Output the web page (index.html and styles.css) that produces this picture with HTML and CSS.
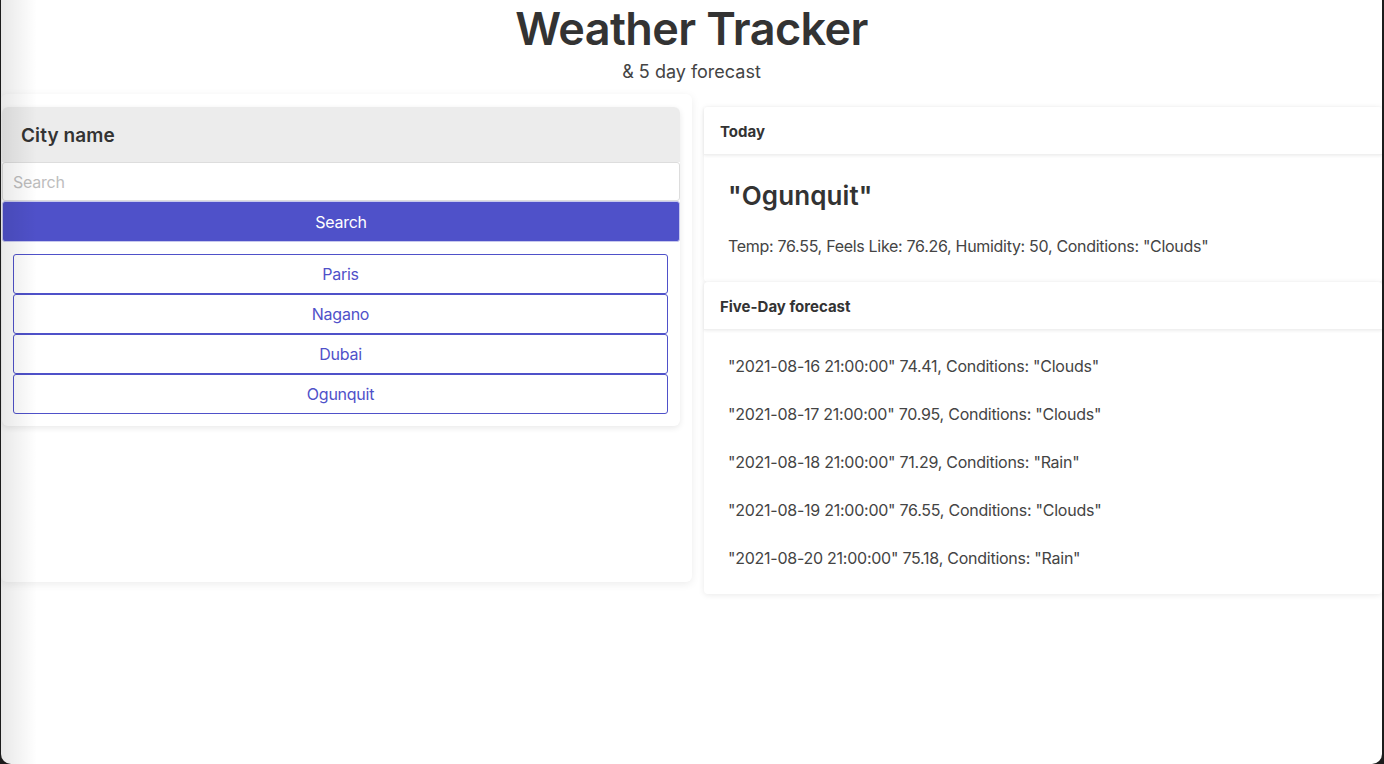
FILE: index.html
```html
<!DOCTYPE html>
<html lang="en">
<head>
<meta charset="utf-8">
<title>Weather Tracker</title>
<link rel="stylesheet" href="styles.css">
</head>
<body>
<div class="window">
  <header class="page-head">
    <h1 class="title">Weather Tracker</h1>
    <p class="subtitle">&amp; 5 day forecast</p>
  </header>
  <main class="layout">
    <section class="search-col">
      <div class="search-card">
        <div class="search-head">City name</div>
        <input class="search-input" type="text" placeholder="Search">
        <button class="search-btn">Search</button>
        <div class="history">
          <button class="city-btn">Paris</button>
          <button class="city-btn">Nagano</button>
          <button class="city-btn">Dubai</button>
          <button class="city-btn">Ogunquit</button>
        </div>
      </div>
    </section>
    <section class="weather-col">
      <div class="card">
        <div class="card-head">Today</div>
        <div class="today-body">
          <h2 class="city">"Ogunquit"</h2>
          <p class="today-info">Temp: 76.55, Feels Like: 76.26, Humidity: 50, Conditions: "Clouds"</p>
        </div>
      </div>
      <div class="card">
        <div class="card-head">Five-Day forecast</div>
        <ul class="forecast">
          <li>"2021-08-16 21:00:00" 74.41, Conditions: "Clouds"</li>
          <li>"2021-08-17 21:00:00" 70.95, Conditions: "Clouds"</li>
          <li>"2021-08-18 21:00:00" 71.29, Conditions: "Rain"</li>
          <li>"2021-08-19 21:00:00" 76.55, Conditions: "Clouds"</li>
          <li>"2021-08-20 21:00:00" 75.18, Conditions: "Rain"</li>
        </ul>
      </div>
    </section>
  </main>
</div>
</body>
</html>
```

FILE: styles.css
```css
* { box-sizing: border-box; }
html, body { margin: 0; padding: 0; }
body {
  background: #1c1c1c;
  font-family: Inter, "Noto Sans", "Liberation Sans", sans-serif;
  color: #333;
  letter-spacing: -0.25px;
}
.window {
  position: relative;
  margin: 0 2px 0 1px;
  height: 764px;
  background: #fff;
  border-radius: 0 0 10px 10px;
  overflow: hidden;
}
.window::after {
  content: "";
  position: absolute;
  top: 0; left: 0; bottom: 0;
  width: 36px;
  background: linear-gradient(to right, rgba(0,0,0,0.09), rgba(0,0,0,0));
  pointer-events: none;
}
.page-head { text-align: center; }
.title {
  margin: 0;
  font-size: 45px;
  line-height: 58px;
  font-weight: 600;
  color: #333;
  letter-spacing: -0.6px;
}
.subtitle {
  margin: 2px 0 0;
  font-size: 18px;
  line-height: 24px;
  color: #444;
  letter-spacing: 0;
}
.layout {
  display: flex;
  gap: 12px;
  margin-top: 10px;
  align-items: flex-start;
}
.search-col {
  width: 691px;
  height: 488px;
  background: #fff;
  border-radius: 6px;
  box-shadow: 0 2px 8px rgba(0,0,0,0.08);
  padding: 13px 12px 0 1px;
}
.search-card {
  display: flex;
  flex-direction: column;
  background: #fff;
  border-radius: 6px;
  box-shadow: 0 2px 6px rgba(0,0,0,0.09);
}
.search-head {
  height: 55px;
  display: flex;
  align-items: center;
  padding-left: 19px;
  padding-top: 1px;
  background: #ececec;
  border-radius: 6px 6px 0 0;
  font-size: 19px;
  font-weight: 600;
  color: #333;
  letter-spacing: 0.1px;
}
.search-input {
  height: 39px;
  border: 1px solid #ddd;
  border-radius: 3px;
  padding: 0 10px;
  font-family: inherit;
  font-size: 16px;
  letter-spacing: -0.25px;
  color: #333;
  outline: none;
}
.search-input::placeholder { color: #bdbdbd; }
.search-btn {
  height: 41px;
  border: 1px solid #c7c8ee;
  border-radius: 3px;
  background: #4f51c9;
  color: #fff;
  font-family: inherit;
  font-size: 16px;
  letter-spacing: -0.25px;
  cursor: pointer;
}
.history {
  display: flex;
  flex-direction: column;
  padding: 12px 12px 12px 11px;
}
.city-btn {
  height: 40px;
  border: 1px solid #4f51c9;
  border-radius: 3px;
  background: #fff;
  color: #4f51c9;
  font-family: inherit;
  font-size: 16px;
  letter-spacing: -0.25px;
  cursor: pointer;
}
.weather-col {
  flex: 1;
  margin-top: 13px;
  display: flex;
  flex-direction: column;
}
.card {
  background: #fff;
  border-radius: 4px;
  box-shadow: 0 1px 6px rgba(0,0,0,0.09);
}
.card-head {
  height: 48px;
  display: flex;
  align-items: center;
  padding-left: 16px;
  padding-top: 1px;
  font-size: 15px;
  font-weight: 700;
  color: #333;
  letter-spacing: 0;
  box-shadow: 0 1px 3px rgba(0,0,0,0.07);
  border-bottom: 1px solid #f0f0f0;
}
.today-body { padding: 24px; }
.city {
  margin: 0;
  font-size: 26px;
  line-height: 34px;
  font-weight: 600;
  color: #333;
  letter-spacing: 0.1px;
}
.today-info {
  margin: 21px 0 0;
  font-size: 16px;
  line-height: 24px;
  color: #444;
  letter-spacing: -0.3px;
}
.forecast {
  list-style: none;
  margin: 0;
  padding: 12px 24px;
}
.forecast li {
  height: 48px;
  display: flex;
  align-items: center;
  font-size: 16px;
  color: #444;
}
```
